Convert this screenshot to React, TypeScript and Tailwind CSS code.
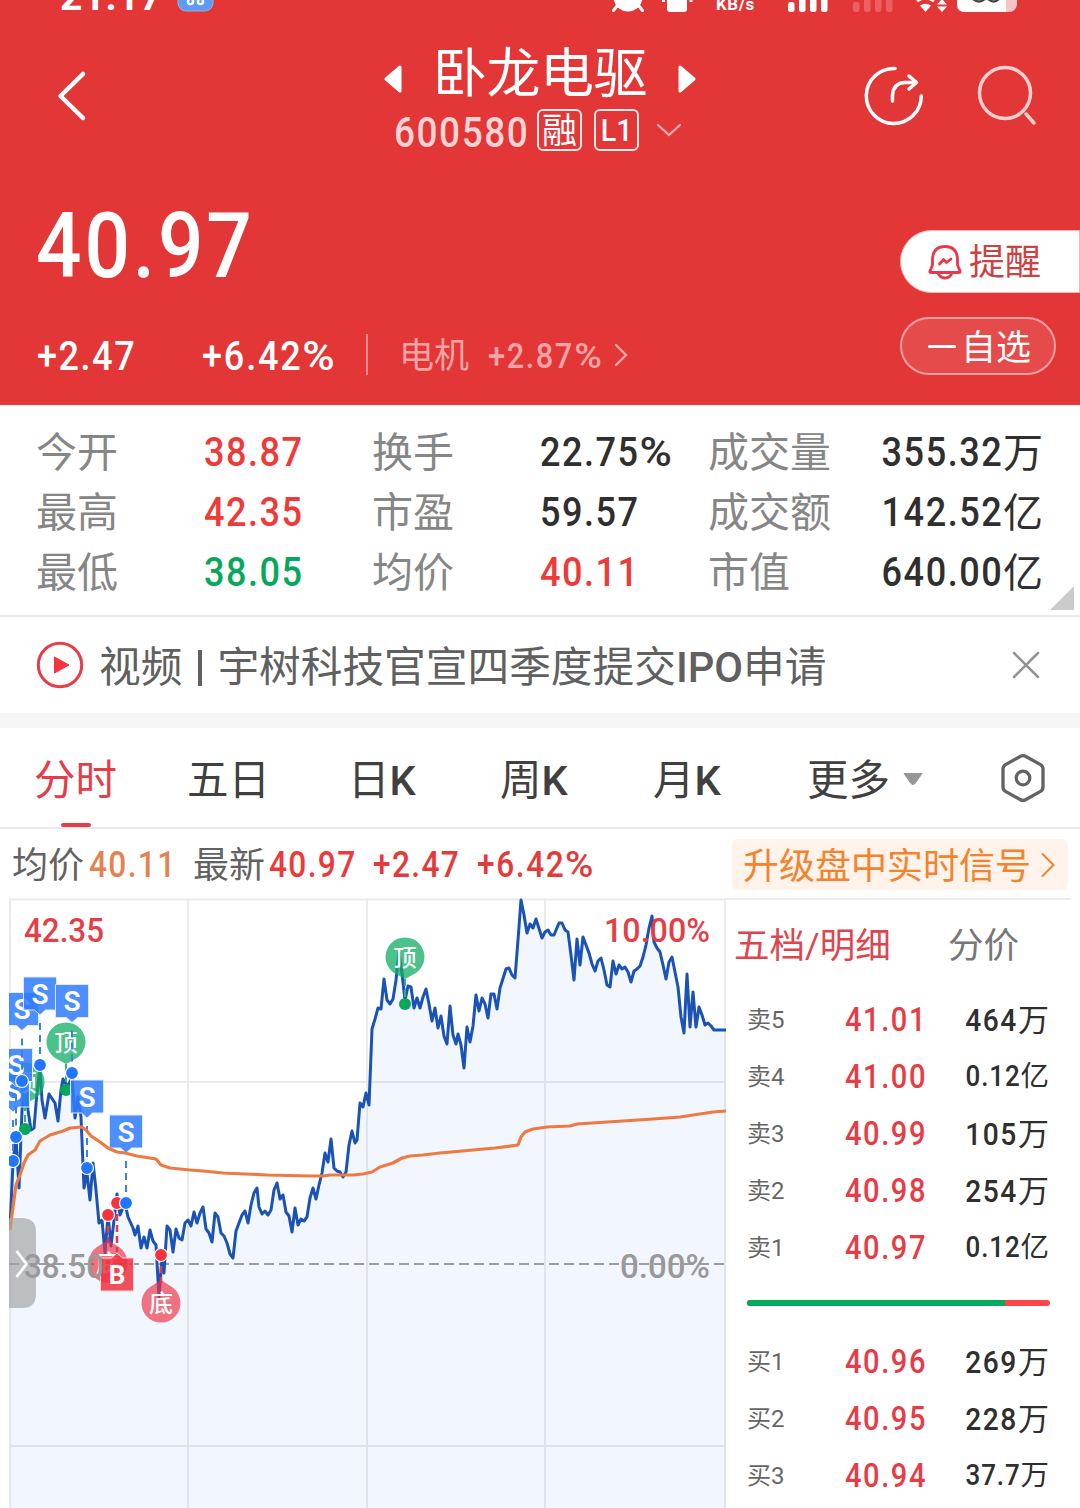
import React from 'react';
import clsx from 'clsx';

type NumProps = {
  children: string;
  className?: string;
  alignRight?: boolean;
};

// narrow digits used for all prices, the percent sign is a bit wider than the digits
const Num = ({ children, className, alignRight }: NumProps) => {
  const isPercent = children.endsWith('%');

  return (
    <span
      className={clsx(
        'inline-block scale-x-[0.88] font-medium whitespace-nowrap',
        alignRight ? 'origin-right' : 'origin-left',
        className || 'tracking-[0.042em]'
      )}
    >
      {isPercent ? children.slice(0, -1) : children}
      {isPercent && <span className="inline-block origin-left scale-x-[1.22]">%</span>}
    </span>
  );
};

const StatusBar = () => (
  <div className="h-3 relative overflow-hidden text-white">
    <div className="absolute left-[60px] bottom-[-5px] text-[39px] leading-none font-bold tracking-[0.01em]">
      21:17
    </div>
    <svg className="absolute left-0 top-0" width="1080" height="12" viewBox="0 0 1080 12">
      <rect x="178" y="-22" width="35" height="33" rx="8" fill="#5b9cf8" stroke="#a9a7d8" strokeWidth="1" />
      <circle cx="190.500" cy="1.500" r="2.600" fill="none" stroke="#fff" strokeWidth="2.400" />
      <circle cx="200.500" cy="1.500" r="2.600" fill="none" stroke="#fff" strokeWidth="2.400" />
      <circle cx="628" cy="-3" r="14.500" fill="#fff" />
      <path d="M617 6 L613.500 10.500 M639 6 L642.500 10.500" stroke="#fff" strokeWidth="3" strokeLinecap="round" />
      <rect x="667" y="-20" width="20" height="32" rx="3" fill="#fff" />
      <path d="M663.500 -4 V2 M691 -4 V2" stroke="#fff" strokeWidth="3" />
      <g fill="#fff">
        <rect x="788" y="2" width="6.500" height="10" rx="2.500" />
        <rect x="799" y="-8" width="6.500" height="20" rx="2.500" />
        <rect x="810" y="-8" width="6.500" height="20" rx="2.500" />
        <rect x="821" y="-8" width="6.500" height="20" rx="2.500" />
      </g>
      <g fill="#ec6061">
        <rect x="853" y="2" width="6.500" height="10" rx="2.500" />
        <rect x="864" y="-8" width="6.500" height="20" rx="2.500" />
        <rect x="875" y="-8" width="6.500" height="20" rx="2.500" />
        <rect x="886" y="-8" width="6.500" height="20" rx="2.500" />
      </g>
      <path d="M917 1 Q925.500 -5 934 1" fill="none" stroke="#fff" strokeWidth="3" />
      <path d="M920 5.500 Q925.500 2 931 5.500 L925.500 12 Z" fill="#fff" />
      <path d="M937 4.500 L942 -1 L947 4.500 Z M937 6.500 H947 L942 12 Z" fill="#fff" />
      <rect x="957" y="-20" width="60" height="32" rx="8" fill="#f7c3c5" />
      <path d="M957 -5 H1006 V12 H965 Q957 12 957 4 Z" fill="#fff" />
      <path d="M973 -1 Q979 4 985 -1 M988 -1 Q994 4 999 -1" fill="none" stroke="#444" strokeWidth="2.200" />
    </svg>
    <div className="absolute left-[716px] bottom-[-1px] text-[17px] leading-none font-bold tracking-[0.03em]">KB/s</div>
  </div>
);

const TitleBar = () => (
  <div className="h-[150px] flex text-white">
    <div className="w-[384px] pl-[57px] pt-[58px]">
      <svg width="30" height="52" viewBox="0 0 30 52">
        <path
          d="M26 4 L3.500 26 L26 48"
          fill="none"
          stroke="#fff"
          strokeWidth="4.500"
          strokeLinecap="round"
          strokeLinejoin="round"
        />
      </svg>
    </div>
    <div className="w-[312px] pt-[31px]">
      <div className="flex items-center justify-between h-[56px]">
        <svg width="18" height="28" viewBox="0 0 18 28" className="mt-4">
          <path d="M2 14 L16 2 V26 Z" fill="#fff" stroke="#fff" strokeWidth="3" strokeLinejoin="round" />
        </svg>
        <span className="pt-[7px] text-[54px] leading-none -tracking-[0.4px]">卧龙电驱</span>
        <svg width="18" height="28" viewBox="0 0 18 28" className="mt-4">
          <path d="M16 14 L2 2 V26 Z" fill="#fff" stroke="#fff" strokeWidth="3" strokeLinejoin="round" />
        </svg>
      </div>
      <div className="flex items-center h-[42px] mt-[10px] pl-[9px]">
        <div className="w-[144px] pt-[5px] pl-px text-[42px] leading-none text-[#ffd3d3]">
          <Num>600580</Num>
        </div>
        <div className="w-[45px] h-[42px] pt-[3px] border-2 border-[#ffeaea] rounded-md flex items-center justify-center text-[35px] leading-none">
          融
        </div>
        <div className="w-[45px] h-[42px] ml-3 border-2 border-[#ffeaea] rounded-md flex items-center justify-center text-[32px] leading-none">
          <span className="font-medium scale-x-90">L1</span>
        </div>
        <svg width="26" height="16" viewBox="0 0 26 16" className="ml-[17px] shrink-0">
          <path d="M2 3 L13 13 L24 3" fill="none" stroke="#f6aeb0" strokeWidth="2.200" strokeLinecap="round" />
        </svg>
      </div>
    </div>
    <div className="flex pl-[168px] pt-[52px]">
      <svg width="60" height="62" viewBox="864 64 60 62" fill="none" stroke="#fff" strokeWidth="3.500" strokeLinecap="round">
        <path d="M895 68.500 A27.500 27.500 0 1 0 921.300 96" />
        <path d="M892.500 101 V95 Q893.500 83 905 82.500 H915" />
        <path d="M909 76 L916.500 82.500 L909 89" strokeLinejoin="round" />
      </svg>
      <svg
        width="62"
        height="64"
        viewBox="976 64 62 64"
        className="ml-[52px]"
        fill="none"
        stroke="#ffcfcf"
        strokeWidth="3.500"
        strokeLinecap="round"
      >
        <circle cx="1005" cy="93" r="25.500" />
        <path d="M1026 114 L1034 123" />
      </svg>
    </div>
  </div>
);

const PriceHeader = () => (
  <div className="h-[243px] flex justify-between text-white">
    <div>
      <div className="h-[166px] pt-[39px] pl-[36px] text-[91px] leading-none">
        <Num className="tracking-[0.036em]">40.97</Num>
      </div>
      <div className="flex items-center h-[56px]">
        <div className="w-[165px] ml-[37px] text-[41px] leading-none">
          <Num>+2.47</Num>
        </div>
        <div className="w-[164px] text-[41px] leading-none">
          <Num className="tracking-[0.05em]">+6.42%</Num>
        </div>
        <div className="w-[2px] h-[41px] -mt-[3px] bg-[#f28a8c]" />
        <div className="ml-[31px] w-[89px] text-[35px] leading-none text-[#f6a3a5]">电机</div>
        <div className="w-[125px] text-[35px] leading-none text-[#f6a3a5]">
          <Num className="tracking-[0.05em]">+2.87%</Num>
        </div>
        <svg width="16" height="26" viewBox="0 0 16 26" className="-mt-[3px]">
          <path d="M3 3 L13 13 L3 23" fill="none" stroke="#f6a3a5" strokeWidth="2.400" strokeLinecap="round" />
        </svg>
      </div>
    </div>
    <div className="w-[180px] pt-[68px]">
      <div className="h-[63px] rounded-l-full border border-[#f9b4b5] bg-white flex items-center pl-[27px] text-[#cf4141] text-[36px] leading-none">
        <svg width="34" height="36" viewBox="0 0 34 36" fill="none" stroke="#e6394a" strokeWidth="2.800" className="mr-[7px]">
          <path
            d="M4.500 21 V15.500 Q5 2.500 17 2.500 Q29 2.500 29.500 15.500 V21 L32 27 Q32.500 28.500 31 28.500 H3 Q1.500 28.500 2 27 Z"
            strokeLinejoin="round"
          />
          <path d="M10 29 Q12 34 17 34 Q22 34 24 29" />
          <path d="M11.500 20 L15.500 15.500 L18.500 18.500 L23 15" strokeLinecap="round" strokeLinejoin="round" />
        </svg>
        <span className="pt-[2px]">提醒</span>
      </div>
      <div className="mt-6 w-[156px] h-[58px] rounded-full border-2 border-[#f59fa1] bg-[#e64b4b] flex items-center pl-[26px] text-[35px] leading-none">
        <div className="w-7 h-[3px] rounded-full bg-white mr-[5px]" />
        <span className="pt-[4px]">自选</span>
      </div>
    </div>
  </div>
);

const stats = [
  ['今开', '38.87', 'text-[#ee3a38]', '换手', '22.75%', 'text-[#2f2f2f]', '成交量', '355.32', '万'],
  ['最高', '42.35', 'text-[#ee3a38]', '市盈', '59.57', 'text-[#2f2f2f]', '成交额', '142.52', '亿'],
  ['最低', '38.05', 'text-[#08a85c]', '均价', '40.11', 'text-[#ee3a38]', '市值', '640.00', '亿'],
];

const Stats = () => (
  <div className="relative h-[212px] border-b-2 border-[#ececec] pt-[17px] pl-[36px] pr-[37px]">
    {stats.map((row) => (
      <div key={row[0]} className="flex items-center h-[60px] text-[41px] leading-none text-[#868686]">
        <div className="w-[168px] pt-[3px]">{row[0]}</div>
        <div className={clsx('w-[168px]', row[2])}>
          <Num>{row[1]}</Num>
        </div>
        <div className="w-[168px] pt-[3px]">{row[3]}</div>
        <div className={clsx('w-[168px]', row[5])}>
          <Num>{row[4]}</Num>
        </div>
        <div className="pt-[3px]">{row[6]}</div>
        <div className="flex-1 flex justify-end items-center text-[#2f2f2f]">
          <Num alignRight>{row[7]}</Num>
          <span className="pt-[3px] text-[40px]">{row[8]}</span>
        </div>
      </div>
    ))}
    <svg className="absolute right-[6px] bottom-[5px]" width="24" height="24" viewBox="0 0 24 24">
      <path d="M24 0 V24 H0 Z" fill="#cbcbcb" />
    </svg>
  </div>
);

const NewsBar = () => (
  <div className="h-[111px] border-b-[15px] border-[#f6f6f6] flex items-center pl-[36px] pr-[40px]">
    <svg width="48" height="48" viewBox="0 0 48 48">
      <circle cx="24" cy="24" r="21.700" fill="none" stroke="#ea3c48" strokeWidth="3" />
      <path d="M18.500 16 L33 24 L18.500 32 Z" fill="#f53440" stroke="#f53440" strokeLinejoin="round" />
    </svg>
    <div className="ml-[15px] pt-[5px] flex-1 text-[41.7px] leading-none text-[#606060] whitespace-nowrap">
      <span>视频</span>
      <span className="inline-block w-[4px] h-[36px] mx-[15.5px] bg-[#606060] align-[-4px]" />
      <span>宇树科技官宣四季度提交</span>
      <span className="font-medium">IPO</span>
      <span>申请</span>
    </div>
    <svg width="28" height="28" viewBox="0 0 28 28">
      <path d="M2 2 L26 26 M26 2 L2 26" stroke="#929292" strokeWidth="2.500" strokeLinecap="round" />
    </svg>
  </div>
);

const PeriodTab = ({ label, className }: { label: string; className: string }) => (
  <div className={clsx('pt-[6px]', className)}>
    {label}
    <span className="font-medium">K</span>
  </div>
);

const ChartTabs = () => (
  <div className="h-[101px] border-b-2 border-[#ebebeb] flex items-center text-[41.5px] leading-none text-[#404040] whitespace-nowrap">
    <div className="relative ml-[34px] w-[153px] h-full pt-[6px] flex items-center text-[#e63c48]">
      分时
      <div className="absolute left-[27px] bottom-0 w-[30px] h-1 rounded-full bg-[#e63c48]" />
    </div>
    <div className="w-[161px] pt-[6px]">五日</div>
    <PeriodTab label="日" className="w-[152px]" />
    <PeriodTab label="周" className="w-[153px]" />
    <PeriodTab label="月" className="w-[154px]" />
    <div className="w-[94px] pt-[6px]">更多</div>
    <svg width="22" height="14" viewBox="0 0 22 14" className="mt-[3px] ml-px">
      <path d="M2 1.500 H20 L13 11.500 Q11 13.500 9 11.500 Z" fill="#979797" stroke="#979797" strokeLinejoin="round" />
    </svg>
    <svg width="46" height="50" viewBox="0 0 46 50" className="ml-[76px] mt-px" fill="none" stroke="#636363" strokeWidth="3.300">
      <path
        d="M20.500 3.300 Q23 1.900 25.500 3.300 L40.500 11.600 Q43 13.100 43 15.800 V34.200 Q43 36.900 40.500 38.400 L25.500 46.700 Q23 48.100 20.500 46.700 L5.500 38.400 Q3 36.900 3 34.200 V15.800 Q3 13.100 5.500 11.600 Z"
      />
      <circle cx="23" cy="25" r="6.800" />
    </svg>
  </div>
);

const InfoBar = () => (
  <div className="h-[69px] flex items-center pl-3 pr-3 pt-[2px] text-[36px] leading-none text-[#626262]">
    <div className="w-[77px] pt-[3px]">均价</div>
    <div className="w-[104px] pt-px text-[#e28350]">
      <Num>40.11</Num>
    </div>
    <div className="w-[76px] pt-[3px]">最新</div>
    <div className="w-[104px] pt-px text-[#ec3a3a]">
      <Num>40.97</Num>
    </div>
    <div className="w-[104px] pt-px text-[#e33b3b]">
      <Num>+2.47</Num>
    </div>
    <div className="flex-1 pt-px text-[#e33b3b]">
      <Num className="tracking-[0.05em]">+6.42%</Num>
    </div>
    <div className="w-[336px] h-[51px] rounded-md bg-[#fff3eb] flex items-center pl-[11px] text-[#f3832d] whitespace-nowrap">
      <span className="pt-[4px]">升级盘中实时信号</span>
      <svg width="16" height="26" viewBox="0 0 16 26" className="ml-[9px] mt-px shrink-0">
        <path d="M2.500 2 L13.500 13 L2.500 24" fill="none" stroke="#f3832d" strokeWidth="2" strokeLinecap="round" />
      </svg>
    </div>
  </div>
);

const priceLine =
  '10,1228 13,1162 16,1138 19,1188 22,1110 25,1082 28,1110 31,1130 34,1128 37,1092 40,1068 42,1100 45,1118 49,1094 55,1103 58,1121 61,1090 63,1079 68,1087 72,1076 75,1118 78,1097 81,1117 84,1188 87,1173 90,1200 93,1163 96,1190 99,1223 102,1220 105,1253 108,1215 111,1246 114,1220 117,1194 120,1215 125,1203 128,1217 133,1228 135,1235 138,1226 141,1248 144,1237 147,1248 150,1230 153,1241 156,1245 159,1297 162,1258 164,1273 167,1226 170,1230 173,1252 176,1229 179,1238 182,1240 185,1223 188,1220 191,1226 194,1212 197,1223 200,1213 203,1207 206,1229 209,1233 212,1242 215,1213 218,1217 221,1233 224,1236 227,1243 230,1254 233,1258 236,1231 242,1215 245,1211 248,1223 251,1205 254,1193 257,1188 259,1207 262,1214 265,1211 268,1215 271,1210 274,1190 277,1183 280,1199 283,1195 286,1212 289,1216 292,1232 295,1208 298,1225 301,1219 304,1221 307,1217 310,1198 313,1188 316,1199 319,1185 322,1173 325,1153 328,1162 331,1139 334,1168 337,1171 340,1172 343,1177 346,1172 349,1145 352,1131 355,1143 357,1140 360,1103 363,1107 366,1093 369,1105 372,1029 375,1019 378,1008 381,1009 384,979 387,1000 390,1004 393,999 396,980 399,952 402,973 405,1000 408,986 411,987 414,1008 417,998 420,1008 423,997 426,989 429,1004 432,1021 435,1008 438,1028 441,1016 444,1036 447,1044 450,1006 453,1035 456,1044 458,1034 461,1045 464,1068 467,1027 470,1042 473,1026 476,995 479,1011 482,998 485,1004 488,1018 491,994 494,994 497,1009 500,988 506,969 509,968 512,975 515,978 518,940 521,900 524,915 527,933 530,924 533,928 536,919 542,938 545,932 548,930 551,935 554,935 559,923 562,923 565,930 568,932 571,955 574,980 577,939 580,965 583,937 589,953 592,964 595,971 598,961 601,958 604,970 607,985 610,987 613,961 616,974 619,965 622,969 625,967 628,972 631,982 634,971 637,969 640,966 643,957 646,945 649,928 652,916 654,942 657,948 660,952 663,965 666,979 669,962 672,957 675,972 678,987 681,1017 684,1033 687,974 690,1027 693,992 696,1027 699,1007 702,1015 705,1025 708,1023 711,1026 714,1030 726,1030';

const avgLine =
  '10,1230 13,1207 16,1185 20,1175 24,1163 28,1155 35,1150 40,1141 50,1135 63,1131 70,1128 82,1127 86,1130 91,1136 100,1142 108,1148 117,1152 125,1153 137,1156 156,1159 161,1165 170,1168 190,1170 203,1171 223,1173 267,1175 310,1176 323,1176 330,1175 353,1175 363,1174 372,1172 380,1167 393,1163 402,1158 410,1156 423,1155 440,1153 473,1150 495,1148 518,1145 521,1137 525,1132 533,1129 547,1127 570,1126 577,1124 653,1119 680,1117 713,1112 726,1111';

type SignalProps = { x: number; y: number; dot: number };

const SellFlag = ({ x, y, dot }: SignalProps) => (
  <g>
    <line x1={x} y1={y + 46} x2={x} y2={dot - 6} stroke="#3f7fe0" strokeWidth="2" strokeDasharray="7 5" />
    <path
      d={`M${x - 16.500} ${y} h33 v33 h-11 l-5.500 5 l-5.500 -5 h-11 Z`}
      fill="#2f7bff"
      fillOpacity="0.85"
      stroke="#dfeaff"
      strokeWidth="1"
    />
    <text x={x} y={y + 26.500} textAnchor="middle" fontSize="28" fontWeight="600" fill="#fff">
      S
    </text>
    <circle cx={x} cy={dot} r="6.500" fill="#2176ff" stroke="#fff" strokeWidth="1.200" />
  </g>
);

const TopPin = ({ x, y, dot }: SignalProps) => (
  <g>
    <line x1={x} y1={y + 22} x2={x} y2={dot} stroke="#2eb47a" strokeWidth="2" strokeDasharray="7 4" />
    <path
      d={`M${x} ${y + 22} L${x - 11} ${y + 16} A19.500 19.500 0 1 1 ${x + 11} ${y + 16} Z`}
      fill="#12ac63"
      fillOpacity="0.75"
    />
    <text x={x} y={y + 8.500} textAnchor="middle" fontSize="23" fontWeight="500" fill="#fff">
      顶
    </text>
    <circle cx={x} cy={dot} r="6" fill="#08a65a" />
  </g>
);

const BottomPin = ({ x, y, dot }: SignalProps) => (
  <g>
    <line x1={x} y1={dot} x2={x} y2={y - 20} stroke="#e03a50" strokeWidth="2.500" strokeDasharray="7 4" />
    <path
      d={`M${x} ${y - 23} L${x - 11} ${y - 16} A19.500 19.500 0 1 0 ${x + 11} ${y - 16} Z`}
      fill="#ee3347"
      fillOpacity="0.68"
    />
    <text x={x} y={y + 9} textAnchor="middle" fontSize="24" fontWeight="500" fill="#fff">
      底
    </text>
    <circle cx={x} cy={dot} r="6.500" fill="#f5333f" stroke="#fff" strokeWidth="1.200" />
  </g>
);

const PriceChart = () => (
  <svg width="717" height="610" viewBox="9 898 717 610" className="block shrink-0">
    <g stroke="#ebebeb" strokeWidth="2">
      <path d="M9 899.500 H726 M10 898 V1508 M725 898 V1508 M188 898 V1508 M367 898 V1508 M545 898 V1508" fill="none" />
      <path d="M9 1082 H726 M9 1446 H726" />
    </g>
    <polygon points={`10,1508 ${priceLine} 726,1508`} fill="#4a8cff" fillOpacity="0.08" />
    <line x1="9" y1="1264" x2="725" y2="1264" stroke="#9a9da5" strokeWidth="1.800" strokeDasharray="10 5" />
    <polyline points={priceLine} fill="none" stroke="#1b52b5" strokeWidth="3" strokeLinejoin="round" />

    <TopPin x={25} y={1082} dot={1129} />
    <TopPin x={66} y={1042} dot={1090} />
    <TopPin x={405} y={957} dot={1004} />
    <SellFlag x={13} y={1074} dot={1161} />
    <SellFlag x={16} y={1048.500} dot={1137} />
    <SellFlag x={22} y={992.500} dot={1081} />
    <SellFlag x={40} y={977} dot={1065} />
    <SellFlag x={72} y={984.500} dot={1073} />
    <SellFlag x={87} y={1080} dot={1168} />
    <BottomPin x={108} y={1263} dot={1215} />
    <BottomPin x={161} y={1303} dot={1255} />
    <g>
      <line x1="117" y1="1203" x2="117" y2="1252" stroke="#e03a50" strokeWidth="2.500" strokeDasharray="7 4" />
      <path d="M100.500 1258 h11 l5.500 -5 l5.500 5 h11 v33 h-33 Z" fill="#f0303f" fillOpacity="0.85" stroke="#ffd5d8" />
      <text x="117" y="1284" textAnchor="middle" fontSize="26" fontWeight="700" fill="#fff">
        B
      </text>
      <circle cx="117" cy="1203" r="6.500" fill="#f5333f" stroke="#fff" strokeWidth="1.200" />
    </g>
    <SellFlag x={126} y={1115} dot={1203} />
    <polyline points={avgLine} fill="none" stroke="#ee7a41" strokeWidth="3.200" strokeLinejoin="round" />

    <path d="M9 1218 H22 Q36 1218 36 1232 V1294 Q36 1308 22 1308 H9 Z" fill="#a3a3a3" fillOpacity="0.68" />
    <g fontSize="33" fontWeight="500">
      <text x="24" y="942" textLength="80" lengthAdjust="spacingAndGlyphs" fill="#e43f49">
        42.35
      </text>
      <text x="604" y="942" textLength="106" lengthAdjust="spacingAndGlyphs" fill="#e43f49">
        10.00%
      </text>
      <text x="24" y="1278" textLength="80" lengthAdjust="spacingAndGlyphs" fill="#999">
        38.50
      </text>
      <text x="620" y="1278" textLength="90" lengthAdjust="spacingAndGlyphs" fill="#999">
        0.00%
      </text>
    </g>
    <path d="M16.500 1251 L26.500 1264 L16.500 1277" fill="none" stroke="#fff" strokeWidth="2.800" />
  </svg>
);

const sells = [
  ['卖5', '41.01', '464', '万'],
  ['卖4', '41.00', '0.12', '亿'],
  ['卖3', '40.99', '105', '万'],
  ['卖2', '40.98', '254', '万'],
  ['卖1', '40.97', '0.12', '亿'],
];

const buys = [
  ['买1', '40.96', '269', '万'],
  ['买2', '40.95', '228', '万'],
  ['买3', '40.94', '37.7', '万'],
];

const OrderRow = ({ row }: { row: string[] }) => {
  // long volumes are set smaller so they fit the column
  const isLong = row[2].length > 3;

  return (
    <div className="flex items-center h-[57px] leading-none">
      <div className="w-[98px] text-2xl text-[#666]">{row[0]}</div>
      <div className="w-[90px] text-[33px] text-[#e63c46]">
        <Num className="tracking-[0.055em]">{row[1]}</Num>
      </div>
      <div
        className={clsx(
          'flex-1 flex justify-end items-center text-[#2f2f2f]',
          isLong ? 'text-[29.5px]' : 'text-[32px]'
        )}
      >
        <Num alignRight className={isLong ? 'tracking-[0.035em]' : 'tracking-[0.055em]'}>
          {row[2]}
        </Num>
        <span className={clsx('pt-[2px]', isLong ? 'text-[28.5px]' : 'text-[31px]')}>{row[3]}</span>
      </div>
    </div>
  );
};

const OrderBook = () => (
  <div className="w-[345px] border-t-2 border-[#ebebeb] overflow-hidden">
    <div className="flex items-center h-[91px] pt-[3px] pl-2 text-[35.5px] leading-none">
      <div className="w-[214px] text-[#e0454f]">五档/明细</div>
      <div className="text-[#777]">分价</div>
    </div>
    <div className="pl-[21px] pr-[22px]">
      {sells.map((row) => (
        <OrderRow key={row[0]} row={row} />
      ))}
      <div className="h-[57px] pb-[3px] flex items-center">
        <div className="flex h-[6px] w-[303px] shrink-0 rounded-full overflow-hidden bg-[#ff454b]">
          <div className="w-[258px] bg-[#04aa5c]" />
        </div>
      </div>
      {buys.map((row) => (
        <OrderRow key={row[0]} row={row} />
      ))}
    </div>
  </div>
);

export default function App() {
  return (
    <div className="w-[1080px] h-[1508px] overflow-hidden bg-white font-['Roboto','Noto_Sans_CJK_SC',sans-serif]">
      <div className="h-[405px] bg-[#e33637]">
        <StatusBar />
        <TitleBar />
        <PriceHeader />
      </div>
      <Stats />
      <NewsBar />
      <ChartTabs />
      <InfoBar />
      <div className="flex pl-[9px]">
        <PriceChart />
        <OrderBook />
      </div>
    </div>
  );
}
